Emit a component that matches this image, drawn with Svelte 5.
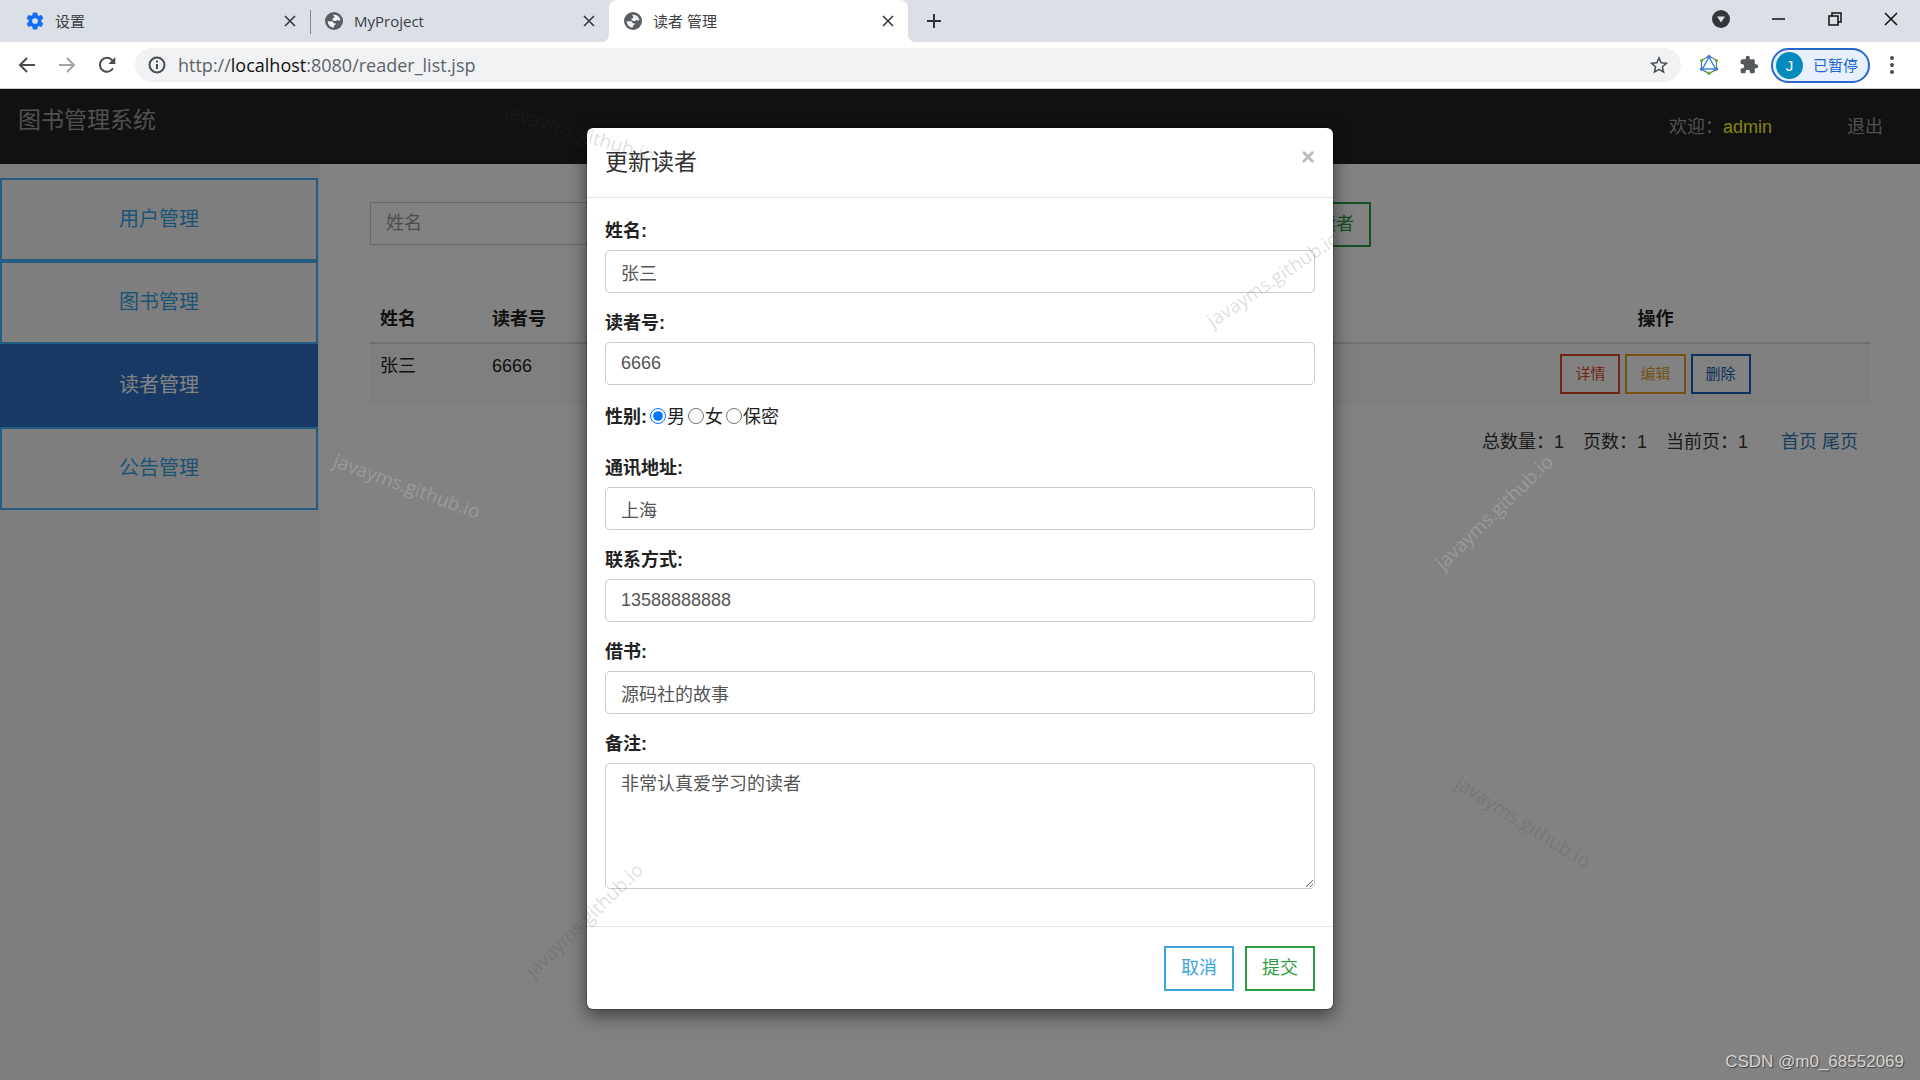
<script lang="ts">
	interface Tab {
		title: string;
		icon: 'gear' | 'globe';
		active?: boolean;
	}

	interface Mark {
		x: number;
		y: number;
		angle: number;
		light?: boolean;
	}

	const tabs: Tab[] = [
		{ title: '设置', icon: 'gear' },
		{ title: 'MyProject', icon: 'globe' },
		{ title: '读者 管理', icon: 'globe', active: true }
	];

	const menu = ['用户管理', '图书管理', '读者管理', '公告管理'];
	const activeMenu = '读者管理';

	const actions = [
		{ text: '详情', kind: 'danger' },
		{ text: '编辑', kind: 'warning' },
		{ text: '删除', kind: 'primary' }
	];

	const counters = [
		{ label: '总数量：', value: 1 },
		{ label: '页数：', value: 1 },
		{ label: '当前页：', value: 1 }
	];

	const genders = ['男', '女', '保密'];

	// centre of each mark in percent of the window
	const marks: Mark[] = [
		{ x: 30.2, y: 12.3, angle: 17 },
		{ x: 21.2, y: 45, angle: 20, light: true },
		{ x: 66.3, y: 25.8, angle: -34 },
		{ x: 77.8, y: 47.4, angle: -44, light: true },
		{ x: 30.4, y: 85.2, angle: -44 },
		{ x: 79.3, y: 76.1, angle: 32 }
	];

	let reader = $state({
		name: '张三',
		no: '6666',
		gender: '男',
		address: '上海',
		phone: '13588888888',
		book: '源码社的故事',
		remark: '非常认真爱学习的读者'
	});
</script>

{#snippet gear()}
	<svg class="favicon" viewBox="0 0 24 24" aria-hidden="true">
		<path
			fill="#146ef5"
			fill-rule="evenodd"
			d="M20.500 13.300a9 9 0 0 0 0-2.600l2.300-1.800a.6.6 0 0 0 .1-.8l-2.200-3.800a.6.6 0 0 0-.7-.2l-2.700 1.100a8 8 0 0 0-1.900-1.100L15 1.200a.6.6 0 0 0-.6-.5H9.600a.6.6 0 0 0-.6.500l-.4 2.900a8 8 0 0 0-1.900 1.100L4 4.100a.6.6 0 0 0-.7.2L1.100 8.100a.6.6 0 0 0 .1.800l2.300 1.800a9 9 0 0 0 0 2.600l-2.300 1.800a.6.6 0 0 0-.1.800l2.200 3.800c.1.2.4.300.7.2l2.700-1.100a8 8 0 0 0 1.900 1.100l.4 2.900c0 .3.300.5.600.5h4.800c.3 0 .6-.2.600-.5l.4-2.900a8 8 0 0 0 1.900-1.100l2.700 1.100c.3.1.6 0 .7-.2l2.200-3.800a.6.6 0 0 0-.1-.8zM12 15.800a3.800 3.800 0 1 1 0-7.600 3.800 3.800 0 0 1 0 7.600z"
		/>
	</svg>
{/snippet}

{#snippet globe()}
	<svg class="favicon" viewBox="0 0 24 24" aria-hidden="true">
		<circle cx="12" cy="12" r="12" fill="#5a5d62" />
		<path
			fill="#f1f3f5"
			d="M10.500 3.800c4-.8 7.900 1.200 9.500 5l.3 2.200c-1.800 1-3 .4-3.800-.6-.8 1.500-2.400 2-4.200 1.500l-2.500-1.200c-.2-1.700.6-2.600 2.400-2.700.3-1.800-.2-3-1.700-4.200z"
		/>
		<path
			fill="#f1f3f5"
			d="M3.600 12.200h5.200c1.800.2 2.500 1.200 2.700 2.700l2.700.2c.2 1.700-.4 2.600-2 2.900l-.5 2.600c-4.500-.2-8-3.700-8.100-8.400z"
		/>
	</svg>
{/snippet}

<div class="window">
	<div class="tabstrip">
		{#each tabs as tab}
			<div class="tab" class:active={tab.active}>
				{#if tab.icon === 'gear'}
					{@render gear()}
				{:else}
					{@render globe()}
				{/if}
				<span class="tab-title">{tab.title}</span>
				<button class="tab-close" aria-label="关闭标签页">
					<svg viewBox="0 0 12 12"><path d="M1 1l10 10M11 1L1 11" /></svg>
				</button>
			</div>
		{/each}
		<button class="new-tab" aria-label="新标签页">
			<svg viewBox="0 0 16 16"><path d="M8 1v14M1 8h14" /></svg>
		</button>
		<div class="window-buttons">
			<button aria-label="搜索标签页">
				<svg width="18" height="18" viewBox="0 0 18 18">
					<circle cx="9" cy="9" r="9" fill="#35363a" />
					<path d="M5 6.500h8L9 12.500z" fill="#dee1e6" />
				</svg>
			</button>
			<button aria-label="最小化">
				<svg width="14" height="14" viewBox="0 0 14 14"><path class="thin" d="M0 7h13" /></svg>
			</button>
			<button aria-label="还原">
				<svg width="14" height="14" viewBox="0 0 14 14">
					<path class="thin" d="M1 4h9v9H1zM4 4V1h9v9h-3" />
				</svg>
			</button>
			<button aria-label="关闭">
				<svg width="14" height="14" viewBox="0 0 14 14">
					<path class="thin" d="M1 1l12 12M13 1L1 13" />
				</svg>
			</button>
		</div>
	</div>

	<div class="toolbar">
		<div class="nav-buttons">
			<button aria-label="后退">
				<svg viewBox="0 0 18 18"><path d="M17 9H2M9 2L2 9l7 7" /></svg>
			</button>
			<button class="off" aria-label="前进">
				<svg viewBox="0 0 18 18"><path d="M1 9h15M9 2l7 7-7 7" /></svg>
			</button>
			<button aria-label="重新加载">
				<svg viewBox="0 0 18 18">
					<path d="M15 12.200A7 7 0 1 1 14.300 4.300L16 6" />
					<path d="M17.300 1v7h-7z" fill="#494c50" stroke="none" />
				</svg>
			</button>
		</div>
		<div class="omnibox">
			<svg width="18" height="18" viewBox="0 0 18 18" fill="none" stroke="#494c50" stroke-width="2">
				<circle cx="9" cy="9" r="7.500" />
				<path d="M9 8v5M9 4.500v2" />
			</svg>
			<div class="url">http://<b>localhost</b>:8080/reader_list.jsp</div>
			<svg width="18" height="18" viewBox="0 0 24 24" fill="none" stroke="#494c50" stroke-width="2">
				<path d="M12 2.500l2.800 6.600 7.100.6-5.400 4.700 1.600 7L12 17.700l-6.100 3.700 1.600-7-5.400-4.700 7.100-.6z" />
			</svg>
		</div>
		<div class="extensions">
			<svg width="20" height="20" viewBox="0 0 20 20" fill="none">
				<path d="M10 1l7.500 4.300v9L10 18.600l-7.500-4.300v-9z" stroke="#6d6f73" stroke-width="1.200" />
				<path d="M10 2L3.500 14h13z" stroke="#3b8be0" stroke-width="1.500" />
				<g fill="#2f7fe0">
					<circle cx="10" cy="1.800" r="1.800" />
					<circle cx="2.600" cy="14" r="1.800" />
					<circle cx="17.400" cy="14" r="1.800" />
				</g>
				<g fill="#5cb338">
					<circle cx="2.600" cy="5.600" r="1.600" />
					<circle cx="17.400" cy="5.600" r="1.600" />
					<circle cx="10" cy="18.200" r="1.800" />
				</g>
			</svg>
			<svg width="20" height="20" viewBox="0 0 24 24">
				<path
					fill="#55585c"
					d="M20.500 11H19V7a2 2 0 0 0-2-2h-4V3.500a2.500 2.500 0 0 0-5 0V5H4a2 2 0 0 0-2 2v3.800h1.500a2.700 2.700 0 0 1 0 5.400H2V20c0 1.100.9 2 2 2h3.800v-1.500a2.700 2.700 0 0 1 5.400 0V22H17a2 2 0 0 0 2-2v-4h1.500a2.500 2.500 0 0 0 0-5z"
				/>
			</svg>
		</div>
		<button class="profile"><span class="avatar">J</span>已暂停</button>
		<button class="dots" aria-label="菜单">
			<svg width="4" height="18" viewBox="0 0 4 18" fill="#494c50">
				<circle cx="2" cy="2" r="2" /><circle cx="2" cy="9" r="2" /><circle cx="2" cy="16" r="2" />
			</svg>
		</button>
	</div>

	<div class="viewport">
		<header class="navbar">
			<a class="brand" href="#home">图书管理系统</a>
			<div class="user">
				<span>欢迎：<span class="user-name">admin</span></span>
				<a href="#logout">退出</a>
			</div>
		</header>

		<div class="content">
			<nav class="sidebar">
				{#each menu as item}
					<a href="#menu" class:active={item === activeMenu}>{item}</a>
				{/each}
			</nav>

			<main>
				<div class="search">
					<input type="text" placeholder="姓名" aria-label="姓名" />
					<button class="btn success">添加读者</button>
				</div>

				<table>
					<thead>
						<tr>
							<th class="col-name">姓名</th>
							<th>读者号</th>
							<th class="col-actions">操作</th>
						</tr>
					</thead>
					<tbody>
						<tr>
							<td>张三</td>
							<td>6666</td>
							<td>
								<div class="actions">
									{#each actions as action}
										<button class="btn small {action.kind}">{action.text}</button>
									{/each}
								</div>
							</td>
						</tr>
					</tbody>
				</table>

				<div class="pager">
					{#each counters as counter}
						<span>{counter.label}{counter.value}</span>
					{/each}
					<span class="pager-links"><a href="#first">首页</a> <a href="#last">尾页</a></span>
				</div>
			</main>
		</div>

		<div class="backdrop">
			<form class="modal" role="dialog" aria-labelledby="modal-title">
				<div class="modal-header">
					<h4 id="modal-title">更新读者</h4>
					<button type="button" class="close" aria-label="关闭">×</button>
				</div>
				<div class="modal-body">
					<div class="group">
						<label for="name">姓名:</label>
						<input id="name" type="text" bind:value={reader.name} />
					</div>
					<div class="group">
						<label for="no">读者号:</label>
						<input id="no" type="text" bind:value={reader.no} />
					</div>
					<div class="group radios">
						<b>性别:</b>
						{#each genders as gender}
							<label><input type="radio" value={gender} bind:group={reader.gender} />{gender}</label>
						{/each}
					</div>
					<div class="group">
						<label for="address">通讯地址:</label>
						<input id="address" type="text" bind:value={reader.address} />
					</div>
					<div class="group">
						<label for="phone">联系方式:</label>
						<input id="phone" type="text" bind:value={reader.phone} />
					</div>
					<div class="group">
						<label for="book">借书:</label>
						<input id="book" type="text" bind:value={reader.book} />
					</div>
					<div class="group">
						<label for="remark">备注:</label>
						<textarea id="remark" bind:value={reader.remark}></textarea>
					</div>
				</div>
				<div class="modal-footer">
					<button type="button" class="btn info">取消</button>
					<button type="button" class="btn success">提交</button>
				</div>
			</form>
		</div>
	</div>

	{#each marks as mark}
		<span
			class="mark"
			class:light={mark.light}
			style="left: {mark.x}%; top: {mark.y}%; transform: translate(-50%, -50%) rotate({mark.angle}deg)"
		>
			javayms.github.io
		</span>
	{/each}
	<span class="credit">CSDN @m0_68552069</span>
</div>

<style>
	:global(body) {
		margin: 0;
	}

	* {
		box-sizing: border-box;
	}

	button {
		font: inherit;
		color: inherit;
		background: none;
		border: 0;
		padding: 0;
		cursor: pointer;
	}

	a {
		text-decoration: none;
	}

	svg {
		display: block;
		flex: none;
	}

	.window {
		position: relative;
		display: flex;
		flex-direction: column;
		min-height: 100vh;
		overflow: hidden;
		font: 18px/25px 'Liberation Sans', 'Noto Sans CJK SC', sans-serif;
		color: #333;
	}

	/* browser bars */
	.tabstrip {
		display: flex;
		height: 42px;
		background: #dbdfe6;
		font: 15px/20px 'Open Sans', 'Noto Sans CJK SC', sans-serif;
	}

	.tab {
		position: relative;
		display: flex;
		align-items: center;
		gap: 11px;
		width: 299px;
		padding: 0 14px 0 15px;
		color: #3c4043;
	}

	.tab:first-child {
		width: 310px;
		padding-left: 26px;
	}

	.tab:first-child::after {
		content: '';
		position: absolute;
		right: -1px;
		top: 10px;
		width: 1px;
		height: 24px;
		background: #85888d;
	}

	.tab.active {
		background: #fff;
		border-radius: 8px 8px 0 0;
	}

	.tab.active::before,
	.tab.active::after {
		content: '';
		position: absolute;
		bottom: 0;
		width: 8px;
		height: 8px;
	}

	.tab.active::before {
		right: 100%;
		background: radial-gradient(circle at 0 0, transparent 8px, #fff 8px);
	}

	.tab.active::after {
		left: 100%;
		background: radial-gradient(circle at 100% 0, transparent 8px, #fff 8px);
	}

	.favicon {
		width: 18px;
		height: 18px;
	}

	.tab-title {
		flex: 1;
	}

	.tab-close svg {
		width: 12px;
		height: 12px;
		stroke: #303236;
		stroke-width: 1.5;
	}

	.new-tab {
		margin-left: 18px;
	}

	.new-tab svg {
		width: 16px;
		height: 16px;
		stroke: #303236;
		stroke-width: 2;
	}

	.window-buttons {
		display: flex;
		align-items: center;
		gap: 42px;
		margin-left: auto;
		padding: 0 22px 4px 0;
	}

	.thin {
		fill: none;
		stroke: #111;
		stroke-width: 1.5;
	}

	.toolbar {
		display: flex;
		align-items: center;
		height: 47px;
		padding: 0 26px 0 18px;
		background: #fff;
		border-bottom: 1px solid #ccc;
	}

	.nav-buttons {
		display: flex;
		gap: 22px;
		margin-right: 19px;
	}

	.nav-buttons svg {
		width: 18px;
		height: 18px;
		fill: none;
		stroke: #494c50;
		stroke-width: 2;
	}

	.nav-buttons .off {
		opacity: 0.5;
	}

	.omnibox {
		display: flex;
		flex: 1;
		align-items: center;
		gap: 12px;
		height: 34px;
		padding: 0 13px;
		border-radius: 17px;
		background: #f0f2f4;
	}

	.url {
		flex: 1;
		font: 18px/24px 'Open Sans', 'Noto Sans', sans-serif;
		color: #5f6368;
	}

	.url b {
		font-weight: 400;
		color: #111;
	}

	.extensions {
		display: flex;
		gap: 20px;
		padding: 0 12px 0 18px;
	}

	.profile {
		display: flex;
		align-items: center;
		gap: 10px;
		height: 35px;
		padding: 0 10px 0 3px;
		border: 2px solid #2a67cc;
		border-radius: 18px;
		background: #e8f0fe;
		color: #1967d2;
		font-size: 15px;
	}

	.avatar {
		width: 27px;
		border-radius: 50%;
		background: #048bbd;
		color: #fff;
		line-height: 27px;
		text-align: center;
	}

	.dots {
		margin-left: 20px;
	}

	/* page */
	.viewport {
		position: relative;
		display: flex;
		flex: 1;
		flex-direction: column;
	}

	.navbar {
		display: flex;
		justify-content: space-between;
		height: 75px;
		padding: 19px 37px 0 18px;
		background: #222;
	}

	.brand {
		color: #9d9d9d;
		font-size: 23px;
	}

	.user {
		display: flex;
		gap: 75px;
		padding-top: 7px;
		color: #9d9d9d;
	}

	.user a {
		color: inherit;
	}

	.user-name {
		color: #ff3;
	}

	.content {
		display: flex;
		flex: 1;
	}

	.sidebar {
		display: flex;
		flex-direction: column;
		width: 319px;
		padding-top: 14px;
		border-right: 1px solid #eee;
		background: #f8f8f8;
	}

	.sidebar a {
		padding: 27px 0;
		border: 2px solid #46b8ff;
		color: #3aa5e6;
		font-size: 20px;
		text-align: center;
	}

	.sidebar a.active {
		border-color: #2f70c4;
		background: #2f70c4;
		color: #fff;
	}

	main {
		flex: 1;
		padding: 38px 50px 0 51px;
	}

	.search {
		display: flex;
		align-items: flex-start;
		gap: 20px;
		width: calc(67% - 4px);
	}

	input[type='text'],
	textarea {
		display: block;
		width: 100%;
		height: 43px;
		padding: 8px 15px;
		border: 1px solid #ccc;
		background: #fff;
		color: #555;
		font: inherit;
	}

	input::placeholder {
		color: #999;
	}

	.search input {
		flex: 1;
	}

	.btn {
		padding: 8px 15px;
		border: 2px solid;
		background: #fff;
		white-space: nowrap;
	}

	.btn.small {
		padding: 8px 13px;
		font-size: 15px;
		line-height: 20px;
	}

	.danger {
		color: #dd4b27;
	}

	.warning {
		color: #e5a02e;
	}

	.primary {
		color: #1a5fb8;
	}

	.info {
		color: #3ca5dd;
	}

	.success {
		color: #2e9e44;
	}

	table {
		width: 100%;
		margin-top: 50px;
		border-collapse: separate;
		border-spacing: 0;
	}

	th,
	td {
		padding: 10px;
		text-align: left;
		vertical-align: top;
		color: #222;
	}

	th {
		border-bottom: 2px solid #ddd;
	}

	td {
		background: #f9f9f9;
	}

	.col-name {
		width: 112px;
	}

	.col-actions {
		width: 429px;
		text-align: center;
	}

	.actions {
		display: flex;
		justify-content: center;
		gap: 5px;
	}

	.pager {
		display: flex;
		justify-content: flex-end;
		gap: 19px;
		margin-top: 26px;
		padding-right: 12px;
	}

	.pager-links {
		padding-left: 14px;
	}

	.pager a {
		color: #337ab7;
	}

	.backdrop {
		position: absolute;
		inset: 0;
		padding-top: 38px;
		background: rgba(0, 0, 0, 0.49);
	}

	.modal {
		width: 748px;
		max-width: 100%;
		margin: 0 auto;
		border: 1px solid rgba(0, 0, 0, 0.2);
		border-radius: 7px;
		background: #fff;
		background-clip: padding-box;
		box-shadow: 0 6px 18px rgba(0, 0, 0, 0.5);
	}

	.modal-header {
		display: flex;
		justify-content: space-between;
		align-items: flex-start;
		height: 70px;
		padding: 17px 18px;
		border-bottom: 1px solid #e5e5e5;
	}

	h4 {
		margin: 0;
		font-size: 23px;
		font-weight: 400;
		line-height: 34px;
	}

	.close {
		padding-top: 2px;
		color: #bbb;
		font-size: 24px;
		font-weight: 700;
		line-height: 20px;
	}

	.modal-body {
		padding: 21px 18px 19px;
		border-bottom: 1px solid #e5e5e5;
		color: #222;
	}

	.modal-body input[type='text'],
	textarea {
		border-radius: 5px;
	}

	.group {
		margin-bottom: 18px;
	}

	.group label {
		display: block;
		margin-bottom: 6px;
		font-weight: 700;
	}

	.radios {
		display: flex;
		gap: 3px;
		padding: 2px 0 8px;
	}

	.radios label {
		display: flex;
		gap: 1px;
		margin: 0;
		font-weight: 400;
	}

	.radios input {
		width: 16px;
		height: 16px;
		margin: 3px 0 0;
	}

	.modal-body textarea {
		height: 126px;
		resize: vertical;
	}

	.modal-footer {
		display: flex;
		justify-content: flex-end;
		gap: 11px;
		padding: 19px 18px 18px;
	}

	.mark {
		position: absolute;
		color: rgba(60, 60, 60, 0.18);
		font: 19px/24px 'Open Sans', sans-serif;
		white-space: nowrap;
		pointer-events: none;
	}

	.mark.light {
		color: rgba(255, 255, 255, 0.2);
	}

	.credit {
		position: absolute;
		right: 16px;
		bottom: 6px;
		color: #d4d4d4;
		font-size: 17px;
		text-shadow: 1px 1px 1px #444;
	}
</style>
